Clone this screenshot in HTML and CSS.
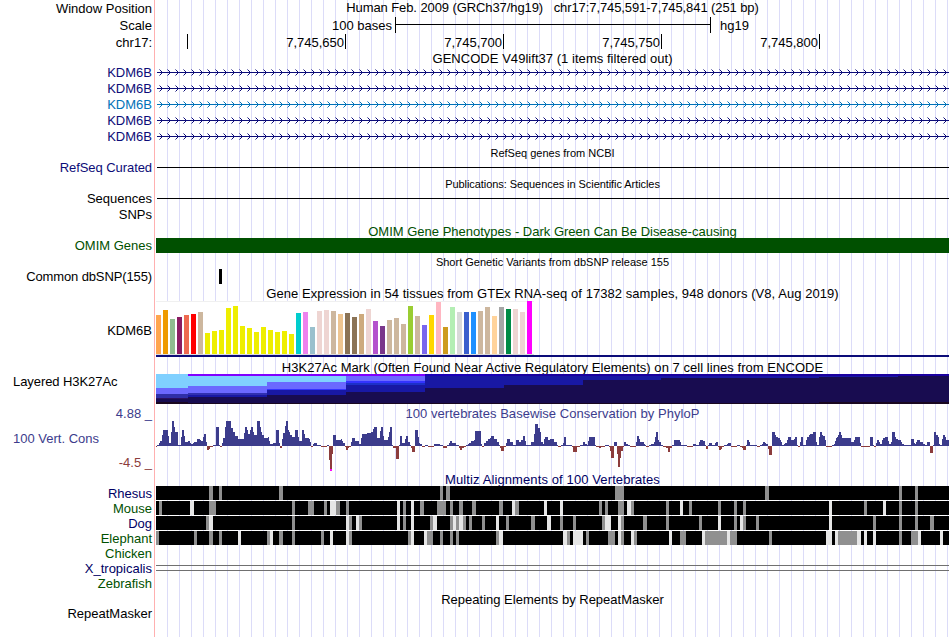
FILE: index.html
```html
<!DOCTYPE html>
<html lang="en">
<head>
<meta charset="utf-8">
<title>Genome tracks</title>
<link rel="stylesheet" href="styles.css">
</head>
<body>
<main class="browser">
  <div class="row head"><div class="label">Window Position</div><div class="plot title top"><span class="t-pos">Human Feb. 2009 (GRCh37/hg19) &nbsp; chr17:7,745,591-7,745,841 (251 bp)</span></div></div>
  <div class="row head"><div class="label">Scale</div><div class="plot scale"><span class="scale-from">100 bases</span><span class="scale-bar"></span><span>hg19</span></div></div>
  <div class="row head"><div class="label">chr17:</div><div class="plot ruler"><span class="tick first"></span><span class="tick">7,745,650</span><span class="tick">7,745,700</span><span class="tick">7,745,750</span><span class="tick">7,745,800</span></div></div>
  <div class="row caption gencode"><div class="plot title"><span class="t-gencode">GENCODE V49lift37 (1 items filtered out)</span></div></div>
  <div class="row gene navy"><div class="label">KDM6B</div><div class="plot arrows"></div></div>
  <div class="row gene navy"><div class="label">KDM6B</div><div class="plot arrows"></div></div>
  <div class="row gene azure"><div class="label">KDM6B</div><div class="plot arrows"></div></div>
  <div class="row gene navy"><div class="label">KDM6B</div><div class="plot arrows"></div></div>
  <div class="row gene navy"><div class="label">KDM6B</div><div class="plot arrows"></div></div>
  <div class="row caption small"><div class="plot title"><span>RefSeq genes from NCBI</span></div></div>
  <div class="row thin"><div class="label navy snug">RefSeq Curated</div><div class="plot line"></div></div>
  <div class="row caption small"><div class="plot title"><span class="t-pubs">Publications: Sequences in Scientific Articles</span></div></div>
  <div class="row thin"><div class="label">Sequences</div><div class="plot line"></div></div>
  <div class="row gene"><div class="label">SNPs</div><div class="plot"></div></div>
  <div class="row caption green"><div class="plot title"><span>OMIM Gene Phenotypes - Dark Green Can Be Disease-causing</span></div></div>
  <div class="row thin"><div class="label green">OMIM Genes</div><div class="plot omim"></div></div>
  <div class="row caption small"><div class="plot title"><span>Short Genetic Variants from dbSNP release 155</span></div></div>
  <div class="row thin"><div class="label tight">Common dbSNP(155)</div><div class="plot snp"><i></i></div></div>
  <div class="row caption gtex-title"><div class="plot title"><span class="t-gtex">Gene Expression in 54 tissues from GTEx RNA-seq of 17382 samples, 948 donors (V8, Aug 2019)</span></div></div>
  <div class="row gtex"><div class="label">KDM6B</div><div class="plot"><div class="bars" id="gtex"></div></div></div>
  <div class="row caption"><div class="plot title"><span class="t-h3k">H3K27Ac Mark (Often Found Near Active Regulatory Elements) on 7 cell lines from ENCODE</span></div></div>
  <div class="row h3k"><div class="label side snug">Layered H3K27Ac</div><div class="plot"><svg id="h3k" width="793" height="30"></svg></div></div>
  <div class="row caption phylo-title wig"><div class="label">4.88 _</div><div class="plot title"><span class="t-phylo">100 vertebrates Basewise Conservation by PhyloP</span></div></div>
  <div class="row phylo"><div class="axis"><span class="wig">100 Vert. Cons</span><span class="min">-4.5 _</span></div><div class="plot"><svg id="phylo" width="793" height="50"></svg></div></div>
  <div class="row caption multiz ink"><div class="plot title"><span class="t-multiz">Multiz Alignments of 100 Vertebrates</span></div></div>
  <div class="row thin"><div class="label ink">Rhesus</div><div class="plot"><svg class="aln" width="793" height="14"></svg></div></div>
  <div class="row thin"><div class="label green">Mouse</div><div class="plot"><svg class="aln" width="793" height="14"></svg></div></div>
  <div class="row thin"><div class="label ink">Dog</div><div class="plot"><svg class="aln" width="793" height="14"></svg></div></div>
  <div class="row thin"><div class="label green">Elephant</div><div class="plot"><svg class="aln" width="793" height="14"></svg></div></div>
  <div class="row thin"><div class="label green">Chicken</div><div class="plot"></div></div>
  <div class="row thin"><div class="label ink">X_tropicalis</div><div class="plot"><div class="double"></div></div></div>
  <div class="row thin"><div class="label green">Zebrafish</div><div class="plot"></div></div>
  <div class="row caption repeat"><div class="plot title"><span>Repeating Elements by RepeatMasker</span></div></div>
  <div class="row thin"><div class="label">RepeatMasker</div><div class="plot"></div></div>
</main>
<script src="tracks.js"></script>
</body>
</html>
```
FILE: styles.css
```css
* { box-sizing: border-box; }
body { margin: 0; background: #fff; }

.browser {
  width: 949px;
  height: 637px;
  overflow: hidden;
  font: 13px/16px "Liberation Sans", Arial, sans-serif;
  color: #000;
  background:
    linear-gradient(#ffb0b0, #ffb0b0) 154px 0 / 1px 100% no-repeat,
    repeating-linear-gradient(90deg, #dcdcf8 0 1px, transparent 1px 12px) 167px 0 / 782px 100% no-repeat;
}

.row { display: flex; height: 15px; line-height: 15px; white-space: nowrap; }
.label { width: 152px; margin-right: 4px; text-align: right; }
.plot { width: 793px; }
.head { height: 17px; line-height: 17px; }
.top { line-height: 16px; }
.gene { height: 16px; line-height: 17px; }
.caption { height: 16px; line-height: 19px; }
.caption > .plot:first-child { margin-left: 156px; }
.title { display: flex; justify-content: center; }
.small { font-size: 11px; line-height: 18px; }
.gencode { height: 13px; line-height: 16px; }
.gtex-title, .phylo-title { height: 17px; }
.multiz, .repeat { height: 15px; line-height: 17px; }

.t-pos { letter-spacing: -.09px; }
.t-gencode { letter-spacing: .04px; }
.t-pubs { letter-spacing: -.065px; }
.t-gtex { letter-spacing: .056px; }
.t-h3k { letter-spacing: .045px; }
.t-phylo { letter-spacing: .04px; }
.t-multiz { letter-spacing: .11px; }
.snug { letter-spacing: -.07px; }
.tight { letter-spacing: -.12px; }

.navy { color: #0c0c78; }
.azure { color: #0072b8; }
.green { color: #005000; }
.ink { color: #000064; }
.wig { color: #3c3c8c; }

.scale { display: flex; }
.scale-from { width: 236px; text-align: right; }
.scale-bar {
  width: 316px;
  height: 16px;
  margin: 0 9px 0 3px;
  border: solid #000;
  border-width: 0 1px;
  background: linear-gradient(#000, #000) 0 7px / 100% 1px no-repeat;
}
.ruler { display: flex; }
.tick { width: 158px; height: 15px; padding-right: 1px; border-right: 1px solid #000; text-align: right; }
.tick.first { width: 32px; }

.arrows { overflow: hidden; }
.plot svg { display: block; shape-rendering: crispEdges; }
.line { background: linear-gradient(#000, #000) 1px 7px / 792px 1px no-repeat; }
.omim { background: #005000; }
.snp i { display: block; width: 3px; height: 15px; margin-left: 63px; background: #000; }

.gtex { height: 57px; line-height: 59px; }
.gtex .plot { height: 56px; border-bottom: 2px solid #0c0c78; }
.bars {
  display: flex;
  align-items: flex-end;
  gap: 2px;
  width: 378px;
  height: 54px;
  background: #fff;
  border-bottom: 1px solid #dcdcdc;
  box-shadow: inset 0 1px #f0f0f0;
}
.bars i { width: 5px; }

.h3k { height: 30px; line-height: 16px; }
.label.side { text-align: left; padding-left: 13px; }
.phylo { height: 50px; }
.axis { width: 156px; padding: 10px 4px 0 13px; display: flex; flex-direction: column; gap: 9px; }
.min { align-self: flex-end; color: #8c3c3c; }
.double { height: 6px; margin-top: 4px; border: solid #707070; border-width: 1px 0; }
```
FILE: tracks.js
```js
const LEFT = 156, RIGHT = 949;
const rect = (x, y, w, h, fill) => `<rect x="${x}" y="${y}" width="${w}" height="${h}" fill="${fill}"/>`;

// Gene introns: a thin line with strand arrows every 8px
document.querySelectorAll('.arrows').forEach(el => {
  let d = '', tips = '';
  for (let x = 4; x < 793; x += 8) {
    d += `M${x} 6h1v1h-1zM${x + 1} 7h1v1h-1zM${x + 2} 8h1v1h-1zM${x + 1} 9h1v1h-1zM${x} 10h1v1h-1z`;
    tips += `M${x - 1} 5h1v1h-1zM${x - 1} 11h1v1h-1z`;
  }
  el.innerHTML = `<svg width="793" height="16" fill="currentColor"><path d="${d}"/><path d="${tips}" opacity=".5"/><path d="M1 8H793V9H1z"/></svg>`;
});

// GTEx tissues: colour, bar height
const tan = '#cdb79e', yel = '#eeee00', pink = '#eed5d2', brown = '#8b7355';
const tissues = [
  ['#ffa54f',39],['#ee9a00',44],['#8fbc8f',35],['#8b1c62',37],['#ee6a50',39],['#ff0000',40],[tan,42],
  [yel,21],[yel,23],[yel,24],[yel,46],[yel,48],[yel,28],[yel,26],[yel,22],[yel,27],[yel,24],[yel,22],[yel,23],[yel,20],
  ['#00cdcd',41],['#ee82ee',42],['#9ac0cd',27],[pink,43],[pink,44],[tan,43],['#eec591',40],[brown,41],[brown,37],
  ['#cdaa7d',40],[pink,45],['#b452cd',33],['#7a378b',28],[tan,34],[tan,36],[tan,30],['#9acd32',48],[tan,38],
  ['#7a67ee',29],['#ffd700',39],['#ffb6c1',52],['#cd9b1d',27],['#b4eeb4',47],['#d9d9d9',42],['#3a5fcd',42],
  ['#1e90ff',42],[tan,43],[tan,47],['#ffd39b',38],['#a6a6a6',47],['#008b45',45],[pink,45],[pink,42],['#ff00ff',53]
];
document.getElementById('gtex').innerHTML = tissues.map(([c, h]) => `<i style="height:${h}px;background:${c}"></i>`).join('');

// Layered H3K27Ac: x start, x end, then [layer bottom, colour] pairs
const cyan = '#80d0ff', peri = '#6b68ff', blue = '#3333ff', royal = '#1818a4', violet = '#8000ff', night = '#180c50', dark = '#1a0820';
const layers = [
  [156,188,[14,cyan],[20,peri],[24,'#2f2fa8'],[25,'#2a1060'],[28,night],[30,dark]],
  [188,267,[2,violet],[12,cyan],[19,peri],[21,'#3030b0'],[23,royal],[29,night],[30,dark]],
  [267,346,[2,violet],[8,cyan],[15,peri],[16,blue],[21,royal],[29,night],[30,dark]],
  [346,425,[2,violet],[7,peri],[9,blue],[11,'#1c30c8'],[18,royal],[29,night],[30,dark]],
  [425,504,[2,'#1a00b8'],[14,royal],[29,night],[30,dark]],
  [504,583,[2,'#1a00a0'],[11,royal],[29,night],[30,dark]],
  [583,661,[2,'#1a00a0'],[6,royal],[29,night],[30,dark]],
  [661,819,[2,'#1a00a0'],[4,royal],[29,night],[30,dark]],
  [819,898,[2,'#1a00a0'],[3,royal],[28,night],[30,dark]],
  [898,949,[2,'#1a00a0'],[28,night],[30,dark]]
];
document.getElementById('h3k').innerHTML = layers.map(([a, b, ...ls]) => {
  let y = 0;
  return ls.map(([to, c]) => { const r = rect(a - LEFT, y, b - a, to - y, c); y = to; return r; }).join('');
}).join('');

// PhyloP scores: panel origin, then "offset:height" runs with offsets in thirds of a pixel
const scores = [
  [150, '18:-1 21:1 27:3 30:5 36:11 39:16 54:10 57:3 63:14 66:25 72:19 75:14 84:1 93:9 97:16 102:10 105:4 114:5 119:3 123:2 130:3 133:4 141:7 150:6 153:5 159:9 162:12 168:4 171:-4 177:-3 180:-1 189:1 198:19 207:1 210:-1 216:3 219:8 225:19 228:25 243:18 249:14 255:10 264:7 282:13 285:19 291:16 294:12 300:16 303:19 309:14 312:11 321:25 330:19 333:14 336:11 342:8 354:9 357:5 361:2 370:3 378:16 387:3 390:-2 396:7 399:13 405:20 408:25 414:16 417:14 420:11 426:9 435:16 444:9 447:5 456:16 462:12 465:8 477:7 480:4 483:-1 489:2 492:3 501:1 513:-1 531:1 537:-14 540:-25 546:-8 549:11 558:6 573:7 576:5 579:3 585:-1 588:-4 594:-2 597:-1 603:4 606:8 615:5 627:2 633:8 636:12 651:13 663:14 669:17 672:19 681:8 690:15 693:19 699:10 702:6 714:9 717:14 720:19 726:1 729:-2 738:-13 747:1 750:10 756:3 765:7 768:10 774:4 780:1 783:-2 786:-6 795:16 804:9 807:3'],
  [420, '0:2 6:-1 15:1 24:-1 42:2 60:1 69:-2 81:1 87:3 90:5 96:3 108:1 117:-2 120:-4 126:-2 132:-1 138:1 144:2 147:3 153:5 162:6 165:15 183:2 186:-1 192:3 198:5 204:7 210:8 213:10 222:7 231:4 237:1 240:-2 244:-5 252:-1 258:3 261:7 270:4 279:1 288:6 297:4 303:6 309:10 315:5 318:1 333:4 342:12 345:22 354:18 360:14 363:4 369:2 372:7 375:9 384:6 390:7 402:4 411:1 414:-1 423:1 429:3 432:9 439:1 456:-1 460:-6 471:-1 480:1 489:4 495:2 501:1 504:5 507:9 525:1 528:-1 537:-2 543:-1 555:1 568:-1 571:-5 573:-12 582:4 591:-8 594:-21 600:-12 603:-5 609:-1 612:4 618:2 624:1 630:-1 648:4 651:10 657:7 660:4 672:2 675:1 678:-1 687:1 693:2 702:4 705:9 708:14 714:6 717:4 723:1 729:-1 738:-2 744:-6 750:-2 755:1 762:6'],
  [680, '0:4 3:1 21:-1 39:2 48:1 57:4 60:6 69:5 75:1 78:-3 84:1 87:3 96:1 105:3 108:4 114:-1 117:-4 123:-3 126:-1 132:1 141:2 144:3 153:-1 171:1 180:-1 186:-2 190:-4 198:1 201:6 207:4 210:1 231:-1 240:1 246:2 249:4 255:3 258:2 264:-3 267:-9 276:14 285:11 288:9 294:8 300:6 303:4 306:1 312:2 315:3 321:6 324:9 333:6 342:7 345:9 351:1 354:-1 360:4 363:9 370:1 378:6 381:9 387:11 390:12 399:14 408:4 411:1 417:9 420:14 426:11 429:10 435:6 438:-1 456:1 462:2 465:5 468:8 471:9 474:11 477:14 483:11 486:8 513:4 522:6 525:9 540:3 543:-1 570:9 579:1 582:-1 588:3 591:6 597:4 600:2 606:6 609:8 615:9 624:5 627:2 633:4 636:14 645:9 648:7 654:6 663:4 666:2 672:1 693:7 702:3 705:2 708:4 711:6 720:4 729:2 735:1 741:4 750:-7 759:1 762:14 768:11 774:9 777:2 780:1 786:7 789:11 795:9 798:6']
];
const runs = scores.flatMap(([o, s]) => s.split(' ').map(p => {
  const [x, h] = p.split(':').map(Number);
  return [o + Math.round(x / 3), h];
}));
document.getElementById('phylo').innerHTML = runs.map(([x, h], i) => {
  const w = Math.max(0, (i + 1 < runs.length ? runs[i + 1][0] : RIGHT) - x);
  return h > 0 ? rect(x - LEFT, 25 - h, w, h, '#3c3c8c') : rect(x - LEFT, 25, w, -h, '#8c3c3c');
}).join('') + rect(174, 48, 2, 2, '#ff00ff');

// Multiz alignments: "g" = partial identity, "l" = mismatch, start-end in window pixels
const alignments = [
  'g209-213 g219-222 g279-283 g440-443 g446-450 g615-624 g765-769 g899-902 g915-918',
  'g159-162 l190-194 g209-216 g292-295 g308-314 g324-327 l330-336 g336-340 g346-349 l397-400 g403-406 l411-414 g420-424 g437-446 g450-453 g459-463 g472-476 g499-503 l512-515 g515-519 l544-547 l560-563 g599-602 g605-608 g618-624 l627-631 g631-634 g666-669 l680-683 g689-692 g718-721 g734-737 g743-746 l829-832 g864-867 l883-886 g899-902 g915-918',
  'g206-209 l209-213 g292-295 l346-349 g349-352 l356-359 g359-362 l397-400 g403-406 l411-414 g430-433 l433-437 g450-453 l453-456 g456-459 l459-463 g463-466 g469-472 g482-485 l496-499 g506-509 g531-535 l547-551 g560-563 g573-576 g602-605 l605-611 l618-621 g621-624 g643-647 g666-669 g699-702 l718-721 g734-737 l740-743 g743-746 g756-759 l829-832 g873-876 g899-902 g915-918 g930-934',
  'g156-159 g194-197 g209-213 g219-222 l238-241 g267-270 l270-273 g279-283 g292-295 g321-324 l330-333 l346-349 g349-352 g408-411 l411-414 l424-427 g427-433 g440-443 g450-453 g456-459 g496-499 l499-503 l563-567 g567-570 l573-583 g586-589 g608-615 l618-621 g621-624 l631-634 g634-637 l669-672 g680-686 l702-705 g705-727 l727-730 g730-737 g769-772 l826-832 l835-838 g838-857 l857-861 l864-867 l873-876 g899-902 g911-918 l918-921 l940-943'
];
document.querySelectorAll('.aln').forEach((svg, i) => {
  svg.innerHTML = rect(0, 0, 793, 14, '#000') + alignments[i].split(' ').map(s => {
    const [a, b] = s.slice(1).split('-').map(Number);
    return rect(a - LEFT, 0, b - a, 14, s[0] === 'g' ? '#909090' : '#e6e6e6');
  }).join('');
});
```
